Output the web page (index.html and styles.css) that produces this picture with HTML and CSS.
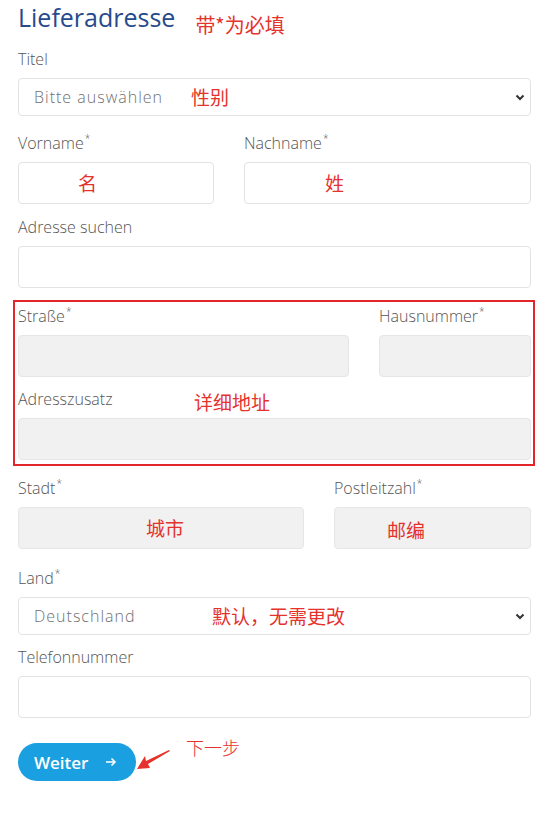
FILE: index.html
```html
<!DOCTYPE html>
<html lang="de">
<head>
  <meta charset="UTF-8">
  <title>Lieferadresse</title>
  <link rel="stylesheet" href="styles.css">
</head>
<body>

  <form class="address-form">
    <h1 class="title">Lieferadresse <span class="note note-head">带*为必填</span></h1>

    <!-- Titel -->
    <div class="field field-titel">
      <label for="titel">Titel</label>
      <div class="control-wrap">
        <select id="titel" class="control select">
          <option>Bitte auswählen</option>
        </select>
        <svg class="chevron" width="10" height="7" viewBox="0 0 10 7"><polyline points="1.5,1.5 5,5 8.5,1.5" fill="none" stroke="#333" stroke-width="2"/></svg>
        <span class="note note-inline" style="left:173px">性别</span>
      </div>
    </div>

    <div class="row row-name">
      <div class="field">
        <label for="vorname">Vorname<sup>*</sup></label>
        <div class="control-wrap">
          <input id="vorname" class="control" type="text">
          <span class="note note-inline" style="left:60px">名</span>
        </div>
      </div>
      <div class="field">
        <label for="nachname">Nachname<sup>*</sup></label>
        <div class="control-wrap">
          <input id="nachname" class="control" type="text">
          <span class="note note-inline" style="left:81px">姓</span>
        </div>
      </div>
    </div>

    <div class="field field-search">
      <label for="suche">Adresse suchen</label>
      <input id="suche" class="control" type="text">
    </div>

    <!-- marked block -->
    <div class="marked">
      <div class="row row-street">
        <div class="field">
          <label for="strasse">Straße<sup>*</sup></label>
          <input id="strasse" class="control control-locked" type="text" disabled>
        </div>
        <div class="field">
          <label for="hausnr">Hausnummer<sup>*</sup></label>
          <input id="hausnr" class="control control-locked" type="text" disabled>
        </div>
      </div>
      <div class="field field-extra">
        <label for="zusatz">Adresszusatz</label>
        <span class="note note-label">详细地址</span>
        <input id="zusatz" class="control control-locked" type="text" disabled>
      </div>
    </div>

    <div class="row row-city">
      <div class="field">
        <label for="stadt">Stadt<sup>*</sup></label>
        <div class="control-wrap">
          <input id="stadt" class="control control-locked" type="text" disabled>
          <span class="note note-inline" style="left:128px">城市</span>
        </div>
      </div>
      <div class="field">
        <label for="plz">Postleitzahl<sup>*</sup></label>
        <div class="control-wrap">
          <input id="plz" class="control control-locked" type="text" disabled>
          <span class="note note-inline note-low" style="left:53px">邮编</span>
        </div>
      </div>
    </div>

    <div class="field field-land">
      <label for="land">Land<sup>*</sup></label>
      <div class="control-wrap">
        <select id="land" class="control select">
          <option>Deutschland</option>
        </select>
        <svg class="chevron" width="10" height="7" viewBox="0 0 10 7"><polyline points="1.5,1.5 5,5 8.5,1.5" fill="none" stroke="#333" stroke-width="2"/></svg>
        <span class="note note-inline" style="left:194px">默认，无需更改</span>
      </div>
    </div>

    <div class="field field-phone">
      <label for="telefon">Telefonnummer</label>
      <input id="telefon" class="control" type="tel">
    </div>

    <div class="actions">
      <button type="button" class="btn-next">Weiter
        <svg width="12" height="10" viewBox="0 0 12 10"><path d="M1 5h9M6.5 1.5L10 5l-3.5 3.5" fill="none" stroke="#fff" stroke-width="1.6"/></svg>
      </button>
      <svg class="pointer" width="40" height="28" viewBox="0 0 40 28"><polygon points="1,22 9,9 10,14 33,3 34,4 12,17 14,21" fill="#e5322d"/></svg>
      <span class="note note-step">下一步</span>
    </div>
  </form>

</body>
</html>
```

FILE: styles.css
```css
body {
  margin: 0;
  background: #fff;
  font-family: "Open Sans", "Noto Sans CJK SC", sans-serif;
}

.address-form {
  width: 513px;
  padding: 0 23px 40px 18px;
}

.title {
  display: flex;
  align-items: flex-start;
  height: 34px;
  margin: 0 0 14px;
  font-size: 25px;
  line-height: 34px;
  font-weight: 400;
  color: #264a8b;
}

.field label {
  display: block;
  font-size: 16px;
  line-height: 22px;
  font-weight: 300;
  color: #555;
  margin-bottom: 8px;
}

.field label sup {
  font-size: 10px;
  line-height: 0;
  vertical-align: 7px;
  margin-left: 1px;
}

.control-wrap {
  position: relative;
}

.control {
  display: block;
  width: 100%;
  height: 42px;
  box-sizing: border-box;
  border: 1px solid #e3e3e3;
  border-radius: 4px;
  background: #fff;
  padding: 0 15px;
  font-family: "Open Sans", sans-serif;
  font-size: 16px;
  font-weight: 300;
  color: #666;
  margin: 0;
}

.control-locked {
  background: #f1f1f1;
  border-color: #e6e6e6;
}

.select {
  height: 38px;
  letter-spacing: 1px;
  color: #707070;
  appearance: none;
  -webkit-appearance: none;
}

.chevron {
  position: absolute;
  right: 6px;
  top: 16px;
}

.row {
  display: grid;
  column-gap: 30px;
}

.row-name { grid-template-columns: 196px 1fr; }
.row-street { grid-template-columns: 1fr 152px; }
.row-city { grid-template-columns: 1fr 197px; }

.field-titel { margin-bottom: 16px; }
.row-name { margin-bottom: 12px; }
.field-search { margin-bottom: 12px; }
.row-street { margin-bottom: 11px; }
.row-city { margin-bottom: 18px; }
.field-land { margin-bottom: 11px; }
.field-phone { margin-bottom: 25px; }

.marked {
  border: 2px solid #e3262a;
  margin: 0 -4px 11px -5px;
  padding: 3px 2px 4px 3px;
}

.field-extra {
  position: relative;
}

/* red annotations */
.note {
  font-family: "Noto Sans CJK SC", sans-serif;
  font-size: 19px;
  line-height: 26px;
  color: #e5322d;
  white-space: nowrap;
}

.note-head {
  margin: 12px 0 0 20px;
  font-size: 20px;
}

.note-inline {
  position: absolute;
  top: 0;
  bottom: 0;
  display: flex;
  align-items: center;
}

.note-low { top: 4px; }

.note-label {
  position: absolute;
  left: 176px;
  top: 1px;
}

.actions {
  position: relative;
  height: 38px;
}

.btn-next {
  display: inline-flex;
  align-items: center;
  gap: 17px;
  height: 38px;
  padding: 0 19px 0 16px;
  border: none;
  border-radius: 19px;
  background: #1a9fe0;
  color: #fff;
  font-family: "Open Sans", sans-serif;
  font-size: 17px;
  font-weight: 600;
}

.pointer {
  position: absolute;
  left: 118px;
  top: 4px;
}

.note-step {
  position: absolute;
  left: 168px;
  top: -9px;
  font-weight: 300;
  font-size: 18px;
}
```
